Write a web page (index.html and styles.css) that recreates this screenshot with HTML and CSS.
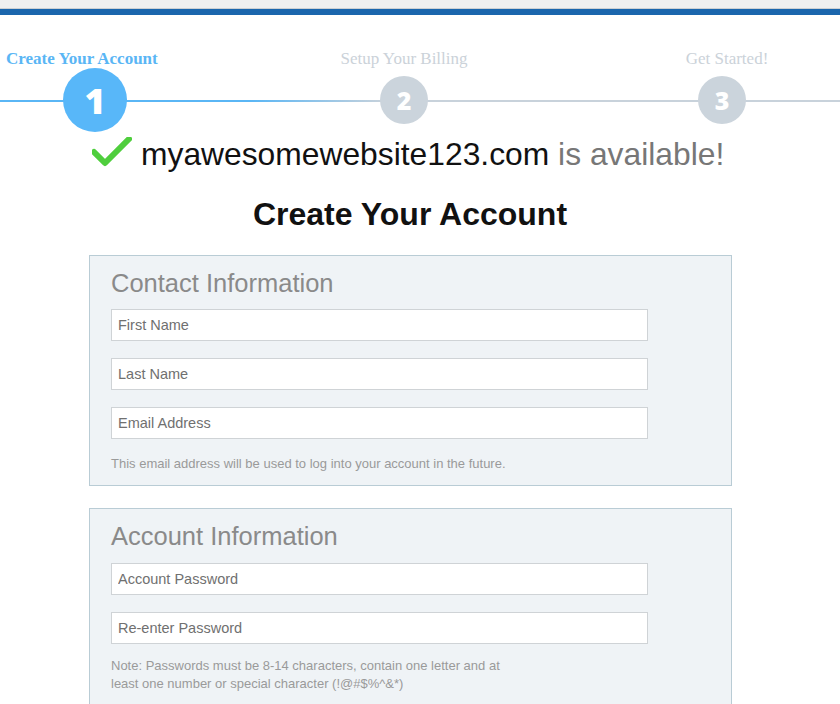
FILE: index.html
```html
<!DOCTYPE html>
<html>
<head>
<meta charset="utf-8">
<link rel="stylesheet" href="styles.css">
</head>
<body>
<div class="chrome"></div>
<div class="bluebar"></div>

<div class="steps">
  <div class="step step-1 active">
    <div class="step-label">Create Your Account</div>
    <div class="step-dot"><span class="circle big">1</span></div>
  </div>
  <div class="step step-2">
    <div class="step-label">Setup Your Billing</div>
    <div class="step-dot"><span class="circle">2</span></div>
  </div>
  <div class="step step-3">
    <div class="step-label">Get Started!</div>
    <div class="step-dot"><span class="circle">3</span></div>
  </div>
</div>

<div class="avail">
  <svg class="check" width="40" height="30" viewBox="0 0 40 30">
    <path d="M2 15 L13 26 L37 2" fill="none" stroke="#4fce3d" stroke-width="6" stroke-linecap="round" stroke-linejoin="round"/>
  </svg>
  <span class="domain">myawesomewebsite123.com</span><span class="avail-text">&nbsp;is available!</span>
</div>

<h2 class="page-title">Create Your Account</h2>

<div class="panel">
  <h3 class="panel-title">Contact Information</h3>
  <input class="field" type="text" placeholder="First Name">
  <input class="field" type="text" placeholder="Last Name">
  <input class="field" type="text" placeholder="Email Address">
  <p class="help">This email address will be used to log into your account in the future.</p>
</div>

<div class="panel">
  <h3 class="panel-title">Account Information</h3>
  <input class="field" type="password" placeholder="Account Password">
  <input class="field" type="password" placeholder="Re-enter Password">
  <p class="help note">Note: Passwords must be 8-14 characters, contain one letter and at<br>least one number or special character (!@#$%^&amp;*)</p>
</div>
</body>
</html>
```
FILE: styles.css
```css
html, body {
  margin: 0;
  padding: 0;
  background: #fff;
  font-family: "Liberation Sans", Arial, sans-serif;
  overflow: hidden;
}

.chrome {
  height: 8px;
  background: #f0f0f0;
  border-bottom: 1px solid #cdd0d3;
}

.bluebar {
  height: 6px;
  background: #1b66ad;
}

.steps {
  position: relative;
  display: flex;
  padding-top: 36px;
}

.steps::before {
  content: "";
  position: absolute;
  left: 0;
  right: 0;
  top: 85px;
  height: 2px;
  background: linear-gradient(90deg, #5ab6f5 0, #5ab6f5 250px, #c8d2db 385px, #c8d2db 100%);
}

.step {
  position: relative;
  display: flex;
  flex-direction: column;
  align-items: center;
  width: 200px;
}

.step-1 {
  width: 190px;
  align-items: flex-start;
}

.step-2 {
  margin-left: 114px;
}

.step-3 {
  margin-left: 118px;
}

.step-label {
  font-family: "Liberation Serif", "Times New Roman", serif;
  font-size: 17px;
  line-height: 16px;
  height: 16px;
  color: #cbd2d9;
  white-space: nowrap;
}

.step-1 .step-label {
  color: #5ab6f5;
  font-weight: bold;
  margin-left: 6px;
}

.step-3 .step-label {
  padding-left: 10px;
}

.step-dot {
  height: 64px;
  margin-top: 1px;
  display: flex;
  align-items: center;
}

.step-1 .step-dot {
  margin-left: 63px;
}

.circle {
  width: 48px;
  height: 48px;
  border-radius: 50%;
  background: #cbd4dc;
  color: #fff;
  display: flex;
  align-items: center;
  justify-content: center;
  font-family: "Open Sans", "Liberation Sans", sans-serif;
  font-weight: 800;
  font-size: 25px;
}

.circle.big {
  width: 64px;
  height: 64px;
  background: #58b7f9;
  font-size: 36px;
}

.avail {
  display: flex;
  align-items: center;
  padding-left: 92px;
  margin-top: 4px;
  height: 36px;
  font-size: 31.8px;
  white-space: nowrap;
}

.check {
  margin-right: 9px;
  margin-top: -4px;
}

.domain {
  color: #111;
}

.avail-text {
  color: #777;
}

.page-title {
  margin: 24px 0 0;
  padding-right: 20px;
  text-align: center;
  font-size: 32px;
  line-height: 36px;
  font-weight: bold;
  color: #111;
}

.panel {
  margin: 23px 0 0 89px;
  width: 599px;
  border: 1px solid #b9ccd5;
  background: #eff3f6;
  padding: 12px 21px 13px;
}

.panel + .panel {
  margin-top: 22px;
}

.panel-title {
  margin: 0 0 11px;
  font-size: 25.5px;
  line-height: 30px;
  font-weight: normal;
  color: #8a8a8a;
}

.panel + .panel .panel-title {
  margin-bottom: 12px;
}

.field {
  display: block;
  box-sizing: border-box;
  width: 537px;
  height: 32px;
  margin: 0 0 17px;
  padding: 0 6px;
  border: 1px solid #cfd3d6;
  background: #fff;
  font-family: "Liberation Sans", Arial, sans-serif;
  font-size: 14.5px;
  color: #333;
  outline: none;
}

.field::placeholder {
  color: #707070;
}

.help {
  margin: 0;
  font-size: 13px;
  line-height: 16px;
  color: #9a9a9a;
}

.note {
  line-height: 18px;
  margin-top: -4px;
}
```
